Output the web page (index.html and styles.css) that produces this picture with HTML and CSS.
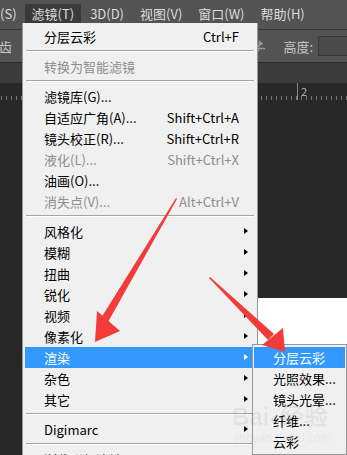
FILE: index.html
```html
<!DOCTYPE html>
<html lang="zh-CN">
<head>
    <meta charset="UTF-8">
    <meta name="viewport" content="width=device-width, initial-scale=1.0">
    <title>滤镜 - 渲染</title>
    <link rel="stylesheet" href="styles.css">
</head>
<body>
    <div class="app">
        <nav class="menubar">
            <span class="top-item first">(S)</span>
            <span class="top-item active">滤镜(T)</span>
            <span class="top-item">3D(D)</span>
            <span class="top-item">视图(V)</span>
            <span class="top-item">窗口(W)</span>
            <span class="top-item">帮助(H)</span>
        </nav>
        <div class="options">
            <span class="opt-label cut">齿</span>
            <span class="spacer"></span>
            <svg class="swap" width="14" height="12" viewBox="0 0 14 12">
                <path d="M1 3.5h8M7 1l3 2.5-3 2.5M13 8.5H5M7 6l-3 2.5 3 2.5" fill="none" stroke="#9a9a9a" stroke-width="1.4"/>
            </svg>
            <span class="opt-label">高度:</span>
            <span class="opt-input"></span>
        </div>
        <div class="tabs"></div>
        <div class="ruler">
            <span class="ruler-num">2</span>
        </div>
        <div class="canvas"></div>
        <div class="canvas-bottom">
            <div class="dark-strip"></div>
            <div class="white-area"></div>
        </div>
    </div>

    <div class="menu">
        <div class="item"><span>分层云彩</span><span class="key">Ctrl+F</span></div>
        <div class="sep"></div>
        <div class="item off"><span>转换为智能滤镜</span></div>
        <div class="sep"></div>
        <div class="item"><span>滤镜库(G)...</span></div>
        <div class="item"><span>自适应广角(A)...</span><span class="key">Shift+Ctrl+A</span></div>
        <div class="item"><span>镜头校正(R)...</span><span class="key">Shift+Ctrl+R</span></div>
        <div class="item off"><span>液化(L)...</span><span class="key">Shift+Ctrl+X</span></div>
        <div class="item"><span>油画(O)...</span></div>
        <div class="item off"><span>消失点(V)...</span><span class="key">Alt+Ctrl+V</span></div>
        <div class="sep"></div>
        <div class="item sub"><span>风格化</span></div>
        <div class="item sub"><span>模糊</span></div>
        <div class="item sub"><span>扭曲</span></div>
        <div class="item sub"><span>锐化</span></div>
        <div class="item sub"><span>视频</span></div>
        <div class="item sub"><span>像素化</span></div>
        <div class="item sub selected"><span>渲染</span></div>
        <div class="item sub"><span>杂色</span></div>
        <div class="item sub"><span>其它</span></div>
        <div class="sep"></div>
        <div class="item sub"><span>Digimarc</span></div>
        <div class="sep"></div>
        <div class="item"><span>浏览联机滤镜...</span></div>
    </div>

    <div class="submenu">
        <div class="item selected"><span>分层云彩</span></div>
        <div class="item"><span>光照效果...</span></div>
        <div class="item"><span>镜头光晕...</span></div>
        <div class="item"><span>纤维...</span></div>
        <div class="item"><span>云彩</span></div>
    </div>

    <div class="watermark">
        <span class="wm-logo">Bai<b>●</b>经验</span>
        <span class="wm-url">jingyan.baidu.com</span>
    </div>

    <svg class="arrows" width="347" height="455" viewBox="0 0 347 455">
        <!-- left arrow -->
        <polygon points="176,198 177,199 108,322 101,318" fill="#f23b3b"/>
        <polygon points="95,342 97,311 120,331" fill="#f23b3b"/>
        <!-- right arrow -->
        <polygon points="209,278 210,277 274,334 268,340" fill="#f23b3b"/>
        <polygon points="285,352 262,345 283,328" fill="#f23b3b"/>
    </svg>
</body>
</html>
```

FILE: styles.css
```css
body, html {
    margin: 0;
    width: 347px;
    height: 455px;
    overflow: hidden;
    background-color: #282828;
    font-family: "Noto Sans CJK SC", "Liberation Sans", sans-serif;
    font-size: 13px;
}
body {
    position: relative;
}
.app {
    display: flex;
    flex-direction: column;
    height: 455px;
}
.menubar {
    height: 29px;
    display: flex;
    align-items: flex-start;
    gap: 2px;
    background-color: #535353;
    border-bottom: 1px solid #383838;
    color: #dcdcdc;
}
.top-item {
    margin-top: 4px;
    height: 19px;
    line-height: 19px;
    padding: 0 7px;
    border-radius: 2px 2px 0 0;
}
.top-item.first {
    padding-left: 0;
    margin-right: -1px;
}
.top-item.active {
    background-color: #3a3a3a;
}
.options {
    height: 32px;
    display: flex;
    align-items: center;
    background-color: #535353;
    border-bottom: 1px solid #2a2a2a;
    color: #c8c8c8;
}
.opt-label.cut {
    margin-left: -1px;
}
.spacer {
    flex: 1;
}
.swap {
    margin-right: 17px;
}
.opt-label {
    margin-right: 5px;
}
.opt-input {
    width: 28px;
    height: 18px;
    background-color: #4a4a4a;
    border: 1px solid #383838;
    border-right: none;
}
.tabs {
    height: 20px;
    background-color: #3b3b3b;
}
.ruler {
    position: relative;
    height: 17px;
    background-color: #282828;
    background-image:
        linear-gradient(#8a8a8a, #8a8a8a),
        repeating-linear-gradient(90deg, #777 0 1px, transparent 1px 5px);
    background-size: 1px 17px, 100% 4px;
    background-position: 297px 0, 1px 100%;
    background-repeat: no-repeat, repeat-x;
}
.ruler-num {
    position: absolute;
    left: 301px;
    top: 0;
    font-size: 11px;
    color: #a8b8c8;
}
.canvas {
    height: 198px;
    background-color: #282828;
}
.canvas-bottom {
    flex: 1;
    display: flex;
}
.dark-strip {
    width: 60px;
    background-color: #282828;
}
.white-area {
    flex: 1;
    background-color: #ffffff;
}

.menu, .submenu {
    position: absolute;
    background-color: #f0f0f0;
    border: 1px solid #979797;
    color: #000;
}
.menu {
    left: 22px;
    top: 23px;
    width: 234px;
    padding-top: 3px;
    border-top: none;
    border-bottom: none;
    height: 440px;
}
.item {
    position: relative;
    display: flex;
    align-items: center;
    height: 21px;
    margin: 0 2px;
    padding: 0 16px 0 19px;
    white-space: nowrap;
}
.key {
    margin-left: auto;
}
.off {
    color: #8d8d8d;
}
.sub::after {
    content: "";
    position: absolute;
    right: 7px;
    top: 7px;
    border-top: 3.5px solid transparent;
    border-bottom: 3.5px solid transparent;
    border-left: 4px solid #000;
}
.selected {
    background-color: #3399ff;
    color: #ffffff;
}
.selected.sub::after {
    border-left-color: #ffffff;
}
.sep {
    height: 1px;
    margin: 3px 3px 4px;
    background-color: #a4a4a4;
    border-bottom: 1px solid #ffffff;
}
.submenu {
    left: 252px;
    top: 344px;
    width: 93px;
    padding: 2px 0;
}
.submenu .item {
    margin: 0 1px;
    padding-left: 19px;
}

.watermark {
    position: absolute;
    left: 232px;
    top: 404px;
    display: flex;
    flex-direction: column;
    color: rgba(0, 0, 0, 0.06);
    pointer-events: none;
}
.wm-logo {
    font-family: "Liberation Sans", sans-serif;
    font-size: 24px;
    font-weight: bold;
    line-height: 26px;
}
.wm-logo b {
    font-size: 18px;
}
.wm-url {
    font-family: "Liberation Sans", sans-serif;
    font-size: 12px;
    line-height: 12px;
    margin-left: 2px;
}
.arrows {
    position: absolute;
    left: 0;
    top: 0;
    pointer-events: none;
}
```
